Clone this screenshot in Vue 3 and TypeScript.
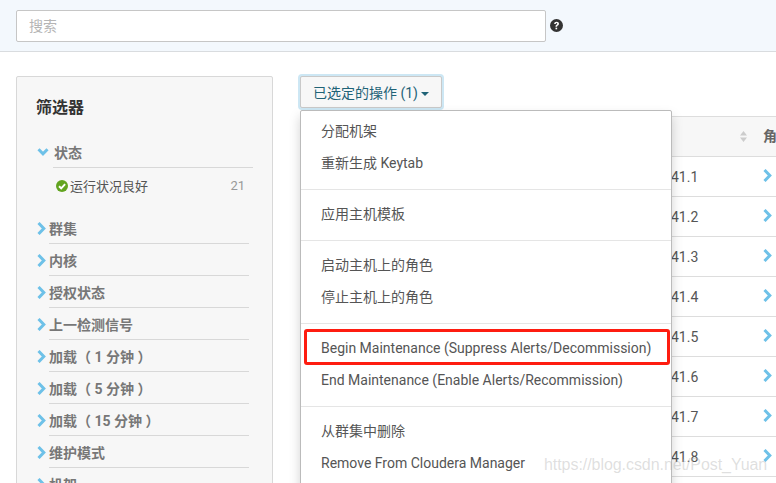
<script setup lang="ts">
const filters: string[] = ['群集', '内核', '授权状态', '上一检测信号', '加载（ 1 分钟 ）', '加载（ 5 分钟 ）', '加载（ 15 分钟 ）', '维护模式', '机架']
const rows: string[] = ['41.1', '41.2', '41.3', '41.4', '41.5', '41.6', '41.7', '41.8']
const groups: { text: string; highlight?: boolean }[][] = [
  [{ text: '分配机架' }, { text: '重新生成 Keytab' }],
  [{ text: '应用主机模板' }],
  [{ text: '启动主机上的角色' }, { text: '停止主机上的角色' }],
  [{ text: 'Begin Maintenance (Suppress Alerts/Decommission)', highlight: true }, { text: 'End Maintenance (Enable Alerts/Recommission)' }],
  [{ text: '从群集中删除' }, { text: 'Remove From Cloudera Manager' }],
]
</script>

<template>
  <div class="page">
    <header class="topbar">
      <input class="search" type="text" placeholder="搜索" />
      <svg class="help" viewBox="0 0 24 24" width="13" height="13">
        <circle cx="12" cy="12" r="12" fill="#333" />
        <path d="M7.600 9.200C7.800 6.600 9.600 5 12.200 5c2.600 0 4.400 1.500 4.400 3.700 0 1.600-.8 2.500-2.100 3.400-1.100.7-1.300 1.100-1.300 2.200h-3c-.1-1.900.4-2.900 1.800-3.800 1-.7 1.400-1.100 1.400-1.800 0-.7-.5-1.200-1.300-1.200-.9 0-1.400.6-1.500 1.700z" fill="#fff" />
        <rect x="10.200" y="16" width="3" height="3" fill="#fff" />
      </svg>
    </header>

    <main class="main">
      <aside class="sidebar">
        <h2 class="title">筛选器</h2>
        <div class="group-open">
          <svg class="chev-down" viewBox="0 0 12 8" width="12" height="8">
            <path d="M1.500 1.200 6 5.800l4.500-4.600" fill="none" stroke="#6ec1e8" stroke-width="3" />
          </svg>
          <span class="group-label">状态</span>
        </div>
        <div class="status-item">
          <svg viewBox="0 0 12 12" width="12" height="12">
            <circle cx="6" cy="6" r="6" fill="#62a420" />
            <path d="M3 6.200 5.200 8.300 9.100 4.100" fill="none" stroke="#fff" stroke-width="1.900" />
          </svg>
          <span class="status-text">运行状况良好</span>
          <span class="count">21</span>
        </div>
        <div v-for="f in filters" :key="f" class="filter">
          <svg class="chev" viewBox="0 0 9 13" width="9" height="13">
            <path d="M1.500 1 6.800 6.500 1.500 12" fill="none" stroke="#6ec1e8" stroke-width="3" />
          </svg>
          <span class="group-label">{{ f }}</span>
        </div>
      </aside>

      <section class="content">
        <button class="action" type="button">
          已选定的操作 (1)<span class="caret"></span>
        </button>

        <div class="table">
          <div class="thead">
            <svg class="sort" viewBox="0 0 7 11" width="7" height="11">
              <path d="M3.500 0 7 4.500H0zM3.500 11 0 6.500h7z" fill="#ccc" />
            </svg>
            <span class="th-role">角</span>
          </div>
          <div v-for="r in rows" :key="r" class="row">
            <span class="ip">{{ r }}</span>
            <svg class="row-chev" viewBox="0 0 9 13" width="9" height="13">
              <path d="M1.500 1 6.800 6.500 1.500 12" fill="none" stroke="#6ec1e8" stroke-width="3" />
            </svg>
          </div>
        </div>

        <div class="menu">
          <div v-for="(g, i) in groups" :key="i" class="menu-group">
            <a v-for="item in g" :key="item.text" class="menu-item" :class="{ marked: item.highlight }">{{ item.text }}</a>
          </div>
        </div>
      </section>
    </main>

    <div class="watermark">https://blog.csdn.net/Post_Yuan</div>
  </div>
</template>

<style>
html, body { margin: 0; overflow: hidden; background: #fff; }
</style>

<style scoped>
.page {
  position: relative;
  width: 776px;
  height: 483px;
  overflow: hidden;
  font-family: Roboto, "Noto Sans CJK SC", sans-serif;
  font-size: 14px;
  color: #555;
}
.topbar {
  box-sizing: border-box;
  height: 52px;
  display: flex;
  align-items: flex-start;
  gap: 4px;
  padding: 10px 16px 0;
  background: #f3f8fd;
  border-bottom: 1px solid #d9dcdf;
}
.search {
  box-sizing: border-box;
  width: 530px;
  height: 32px;
  padding: 0 12px;
  border: 1px solid #c6c6c6;
  border-radius: 2px;
  background: #fff;
  font: 14px Roboto, "Noto Sans CJK SC", sans-serif;
  outline: none;
}
.search::placeholder { color: #b5b5b5; }
.help { margin-top: 9px; }
.main {
  display: flex;
  align-items: flex-start;
  padding: 24px 0 0 16px;
}
.sidebar {
  box-sizing: border-box;
  width: 257px;
  height: 500px;
  flex: none;
  padding: 20px 19px 0;
  background: #f7f7f7;
  border: 1px solid #d8d8d8;
  border-radius: 2px;
}
.title {
  margin: 0;
  font-size: 16px;
  line-height: 22px;
  font-weight: 700;
  color: #333;
}
.group-open {
  display: flex;
  align-items: center;
  gap: 5px;
  height: 22px;
  margin-top: 22px;
  margin-bottom: 4px;
  padding-left: 1px;
}
.group-label {
  font-size: 14px;
  font-weight: 700;
  color: #777;
}
.status-item {
  box-sizing: border-box;
  display: flex;
  align-items: center;
  height: 38px;
  margin-left: 17px;
  padding: 0 8px 2px 3px;
  margin-bottom: 7px;
  border-top: 1px solid #d8d8d8;
  font-size: 13px;
}
.status-text { margin-left: 2px; color: #555; }
.count { margin-left: auto; color: #999; }
.filter {
  display: flex;
  align-items: center;
  gap: 3px;
  height: 32px;
  width: 213px;
  padding-left: 1px;
  box-sizing: border-box;
}
.filter .group-label {
  flex: 1;
  padding-top: 4px;
  line-height: 27px;
  border-bottom: 1px solid #d8d8d8;
}
.chev { flex: none; margin-top: 1px; }
.chev-down { flex: none; }
.content {
  position: relative;
  flex: 1;
  margin-left: 27px;
}
.action {
  box-sizing: border-box;
  display: block;
  width: 142px;
  height: 32px;
  padding: 0;
  background: #f7f7f7;
  border: 1px solid #c9c9c9;
  border-radius: 2px;
  box-shadow: 0 0 0 2px #cde7f4;
  color: #1f6377;
  font: 14px Roboto, "Noto Sans CJK SC", sans-serif;
}
.caret {
  display: inline-block;
  margin-left: 3px;
  vertical-align: 2px;
  border-top: 4px solid #1f6377;
  border-left: 4px solid transparent;
  border-right: 4px solid transparent;
}
.table {
  margin-top: 8px;
  border-top: 1px solid #ddd;
}
.thead, .row {
  box-sizing: border-box;
  display: flex;
  align-items: center;
  height: 40px;
  border-bottom: 1px solid #ddd;
}
.thead {
  background: #f7f7f7;
  font-weight: 700;
  color: #666;
}
.sort { position: absolute; left: 440px; top: 55px; }
.th-role { position: absolute; left: 463px; top: 50px; line-height: 20px; white-space: nowrap; }
.row { padding-left: 371px; }
.ip { width: 92px; color: #555; }
.row-chev { flex: none; margin-top: -2px; }
.menu {
  position: absolute;
  left: 0;
  top: 34px;
  box-sizing: border-box;
  width: 372px;
  background: #fff;
  border: 1px solid #bbb;
  border-radius: 2px;
  box-shadow: 0 6px 12px rgba(0, 0, 0, 0.175);
  padding: 4px 0 0;
}
.menu-group {
  padding-bottom: 10px;
  margin-bottom: 8px;
  border-bottom: 1px solid #e5e5e5;
}
.menu-group:last-child { border-bottom: 0; }
.menu-item {
  display: block;
  height: 32px;
  line-height: 32px;
  padding-left: 20px;
  color: #555;
  white-space: nowrap;
  position: relative;
}
.marked::after {
  content: "";
  position: absolute;
  left: 3px;
  top: -3px;
  box-sizing: border-box;
  width: 366px;
  height: 36px;
  border: 3px solid #fe1c10;
  border-radius: 3px;
}
.watermark {
  position: absolute;
  left: 544px;
  top: 455px;
  font: 16px/20px "Liberation Sans", sans-serif;
  letter-spacing: -0.06px;
  color: rgba(170, 170, 170, 0.38);
  white-space: nowrap;
}
</style>
